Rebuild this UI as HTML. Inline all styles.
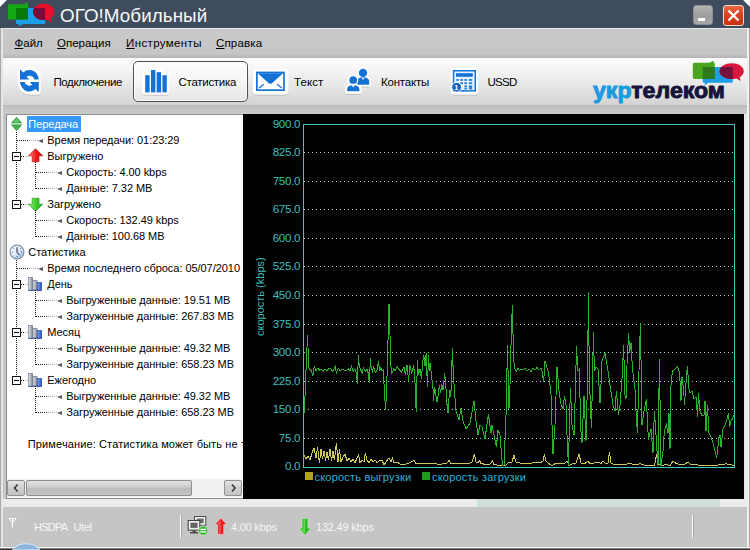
<!DOCTYPE html>
<html lang="ru"><head><meta charset="utf-8"><title>ОГО!Мобильный</title>
<style>
html,body{margin:0;padding:0;width:750px;height:550px;overflow:hidden;background:#fff;}
body{font-family:"Liberation Sans","DejaVu Sans",sans-serif;font-size:11px;color:#000;position:relative;}
*{box-sizing:border-box;}
.abs{position:absolute;}
#win{position:absolute;left:0;top:0;width:750px;height:550px;background:#c6c6c6;overflow:hidden;clip-path:polygon(7px 0,743px 0,750px 7px,750px 550px,0 550px,0 7px);}
#title{position:absolute;left:0;top:0;width:750px;height:28px;background:#3e4c5e;}
#title .cap{position:absolute;left:60px;top:4px;font-size:18.8px;line-height:24px;letter-spacing:0.08px;color:#f8f8f8;white-space:nowrap;}
#menubar{position:absolute;left:0;top:28px;width:750px;height:30px;background:linear-gradient(#c9c9c9,#c6c6c6 85%,#b4b4b4);border-top:1px solid #e6e8ea;}
#menubar span{position:absolute;top:7px;font-size:11.5px;line-height:15px;color:#000;white-space:nowrap;}
#menubar u{text-decoration:underline;text-underline-offset:1px;}
#toolbar{position:absolute;left:3px;top:58px;width:744px;height:47px;background:linear-gradient(#fcfcfc 0%,#f3f3f3 30%,#e4e4e4 65%,#d3d3d3 100%);}
.lbl{position:absolute;top:75px;font-size:11.5px;line-height:14px;color:#000;white-space:nowrap;}
#band{position:absolute;left:3px;top:105px;width:745px;height:9px;background:linear-gradient(#bababa,#c4c4c4 40%,#cacaca);}
#selbtn{position:absolute;left:133px;top:61px;width:115px;height:41px;border:1.5px solid #505050;border-radius:5px;background:linear-gradient(#fefefe,#f4f4f4 55%,#e6e6e6);box-shadow:inset 0 0 0 1px rgba(255,255,255,.9);}
#tree{position:absolute;left:6px;top:114px;width:238px;height:385px;background:#fff;border:1px solid #8c8c8c;overflow:hidden;}
#treein{position:absolute;left:0;top:0;width:236px;height:364px;overflow:hidden;}
.t{position:absolute;height:16px;line-height:17px;padding:0 3px 0 2px;margin-left:-2px;text-indent:-0.7px;white-space:nowrap;font-size:11px;letter-spacing:-0.05px;color:#000;}
.t.sel{background:#3399ff;color:#fff;}
.row{position:absolute;left:0;width:60px;height:16px;}
.ti{position:absolute;}
.dv{position:absolute;width:1px;background:repeating-linear-gradient(to bottom,#1a1a1a 0 1px,transparent 1px 2px);}
.dh{position:absolute;height:1px;background:repeating-linear-gradient(to right,#1a1a1a 0 1px,transparent 1px 2px);-webkit-mask-image:linear-gradient(to right,#000 0 50%,rgba(0,0,0,.35) 62% 100%);mask-image:linear-gradient(to right,#000 0 50%,rgba(0,0,0,.35) 62% 100%);}
.dh.s{-webkit-mask-image:none;mask-image:none;}
.tr{position:absolute;width:0;height:0;border-top:2.5px solid transparent;border-bottom:2.5px solid transparent;border-right:5px solid #585858;margin-top:0.5px;}
.bx{position:absolute;width:9px;height:9px;border:1px solid #111;background:#fff;}
.bx:after{content:"";position:absolute;left:1px;top:3px;width:5px;height:1px;background:#000;}
#hs{position:absolute;left:0px;top:364px;width:235px;height:18px;background:#f0f0f0;border:1px solid #f0f0f0;}
#hs .b{position:absolute;top:0;width:18px;height:16px;border:1px solid #909090;border-radius:2px;background:linear-gradient(#e4e4e4,#cfcfcf 50%,#c4c4c4);}
#hs .th{position:absolute;left:18px;top:0;width:166px;height:16px;border:1px solid #8f8f8f;border-radius:2px;background:linear-gradient(#e2e2e2,#cdcdcd 45%,#bbbbbb 55%,#c4c4c4);}
#chart{position:absolute;left:243px;top:114px;width:501px;height:385px;background:#000;}
#chart text{font-family:"Liberation Sans","DejaVu Sans",sans-serif;font-size:11px;}
#chart .ax{fill:#3cbfbd;font-size:11.6px;letter-spacing:-0.28px;}
#chart .lg{fill:#30b2d8;font-size:11px;letter-spacing:0.2px;}
#strip{position:absolute;left:3px;top:499px;width:745px;height:8px;background:#ececec;}
#strip i{position:absolute;left:474px;top:0;width:243px;height:8px;background:#cfe0da;}
#status{position:absolute;left:3px;top:507px;width:745px;height:41px;background:#c5c5c5;}
.st{position:absolute;top:520px;line-height:14px;font-size:11px;letter-spacing:-0.2px;color:#f6f6f6;white-space:pre;}
.sep{position:absolute;top:515px;width:1px;height:23px;background:#fff;box-shadow:1px 0 0 #a4a4b4;}
.edgeL{position:absolute;left:0;top:28px;width:3px;height:522px;background:linear-gradient(to right,#a8a8a8 0 1px,#e6e6e6 1px 3px);}
.edgeR{position:absolute;left:747px;top:28px;width:3px;height:522px;background:linear-gradient(to right,#f0f0f0 0 2px,#a4a4a4 2px 3px);}
.edgeB{position:absolute;left:0;top:547px;width:750px;height:3px;background:linear-gradient(#f2f2f2 0 1px,#8a8a8a 1px 2px,#2a2a2a 2px 3px);}
</style></head>
<body>
<div id="win">
 <div id="title">
  <svg class="abs" style="left:0;top:0" width="60" height="28" viewBox="0 0 60 28">
   <defs><clipPath id="cb"><rect x="16" y="8" width="29" height="16"/></clipPath></defs>
   <path d="M16 8 H45 V24 H23.5 L18.6 26.3 L19 24 H16 Z" fill="#1a9fe8"/>
   <path d="M8 4.2 H24 L27.4 1.8 L28 4.2 V19.5 H8 Z" fill="#14a714"/>
   <path d="M43.600 3.500 C49.500 3.500 54.300 7.200 54.300 11.800 C54.300 14.300 52.900 16.500 50.700 18 L51.600 23 L47.200 19.600 C46 19.900 44.800 20.100 43.600 20.100 C37.700 20.100 33 16.400 33 11.800 C33 7.200 37.700 3.500 43.600 3.500 Z" fill="#e60f2d"/>
   <rect x="16" y="8" width="12" height="11.500" fill="#077907"/>
   <ellipse cx="43.600" cy="11.800" rx="10.600" ry="8.300" fill="#7a0a3a" clip-path="url(#cb)"/>
  </svg>
  <div class="cap">ОГО!Мобильный</div>
  <div class="abs" style="left:693px;top:5px;width:20px;height:20px;border-radius:3px;background:linear-gradient(#b5b5b5,#9d9d9d 55%,#a8a8a8);border:1px solid #8a8f96;"><i class="abs" style="left:4px;top:12px;width:7px;height:3px;background:#fff;"></i></div>
  <div class="abs" style="left:723px;top:5px;width:21px;height:21px;border-radius:3px;background:linear-gradient(#e96a45,#d8401c 50%,#c93010);border:1px solid #f6d8cc;">
   <svg width="19" height="19" viewBox="0 0 19 19" style="position:absolute;left:0;top:0"><path d="M4.500 4.500 L14.500 14.500 M14.500 4.500 L4.500 14.500" stroke="#fff" stroke-width="2.300"/></svg>
  </div>
 </div>
 <div id="menubar">
  <span style="left:14.5px"><u>Ф</u>айл</span>
  <span style="left:57px"><u>О</u>перация</span>
  <span style="left:126px;letter-spacing:0.38px"><u>И</u>нструменты</span>
  <span style="left:216px;letter-spacing:0.15px"><u>С</u>правка</span>
 </div>
 <div id="toolbar"></div>
 <div id="selbtn"></div>
 <svg class="abs" style="left:0;top:58px" width="750" height="47" viewBox="0 58 750 47">
  <defs><clipPath id="cb2"><rect x="702.700" y="67" width="30.100" height="15.800"/></clipPath>
  <filter id="sh" x="-20%" y="-20%" width="140%" height="140%"><feDropShadow dx="0" dy="0.600" stdDeviation="0.700" flood-color="#000" flood-opacity=".28"/></filter></defs>
  <!-- refresh -->
  <g filter="url(#sh)"><path d="M21.500 66.800 H30 C36 66.800 40.800 71.500 40.800 77 V91 Q40.800 94.400 37.500 94.400 H29 C23 94.400 18 89.700 18 84 V70 Q18 66.800 21.500 66.800 Z" fill="#fff"/></g>
  <g fill="#1472d6"><path id="ra" d="M20 69.300 L20 79.400 L29.200 79.400 L26.500 76.700 C28.300 75.300 31 75.400 32.600 76.800 C33.400 77.500 34 78.400 34.200 79.400 L38.800 79.400 C38.600 76.400 37 73.400 34.400 71.500 C31 69.100 26.300 69.500 23.300 72.400 Z"/><use href="#ra" transform="rotate(180 29.400 80.700)"/></g>
  <!-- bars -->
  <g filter="url(#sh)"><path d="M141.800 91 V76 Q141.800 72.600 145 72.600 H148.400 Q148.600 67.600 153 67.600 H159.600 Q163.600 67.800 163.800 72.600 H166.400 Q169.600 72.600 169.600 76 V91 Q169.600 94.800 166 94.800 H145.500 Q141.800 94.800 141.800 91 Z" fill="#fff"/></g>
  <g fill="#1472d6"><rect x="145.200" y="75.200" width="4.400" height="17.200"/><rect x="151" y="70" width="4.400" height="22.400"/><rect x="156.700" y="72.200" width="4.400" height="20.200"/><rect x="162.400" y="75.200" width="4.400" height="17.200"/></g>
  <!-- envelope -->
  <g filter="url(#sh)"><rect x="252.600" y="68.800" width="36" height="25.600" rx="4" fill="#fff"/></g>
  <rect x="256" y="71.600" width="28.800" height="19.400" fill="#1472d6"/>
  <rect x="257.700" y="73.300" width="25.400" height="16" fill="#fff"/>
  <path d="M257.700 73.300 H283.100 L272 83.200 Q270.400 84.500 268.800 83.200 Z" fill="#1472d6"/>
  <path d="M259 88 L263.800 84.300 M277 84.300 L281.800 88" stroke="#1472d6" stroke-width="1.300" fill="none"/>
  <!-- contacts -->
  <g filter="url(#sh)" fill="#fff" stroke="#fff" stroke-width="4.400" stroke-linejoin="round">
   <circle cx="363" cy="72.900" r="4"/><path d="M357.600 84.400 V81.500 C357.600 78.600 360 77.400 363 77.400 C366.200 77.400 368.800 78.600 368.800 81.500 V84.400 Z"/>
   <circle cx="353.200" cy="80.200" r="4"/><path d="M347 91.500 V89 C347 86 349.600 84.900 353.200 84.900 C357 84.900 359.500 86 359.500 89 V91.500 Z"/>
  </g>
  <g fill="#1472d6">
   <circle cx="363" cy="72.900" r="4.200"/><path d="M357.200 84.800 V81.500 C357.200 78.400 360 77.200 363 77.200 C366.200 77.200 369.200 78.400 369.200 81.500 V84.800 Z"/>
  </g>
  <g fill="#1472d6" stroke="#fff" stroke-width="1.300">
   <circle cx="353.200" cy="80.200" r="4.500"/><path d="M346.500 92 V89 C346.500 85.800 349.600 84.500 353.200 84.500 C357 84.500 360 85.800 360 89 V92 Z"/>
  </g>
  <path d="M361.500 77.700 L363 80 L364.500 77.700 Z M351.700 85.300 L353.200 87.600 L354.700 85.300 Z" fill="#fff"/>
  <!-- ussd -->
  <g filter="url(#sh)"><rect x="450.800" y="67.400" width="27.200" height="27" rx="2.500" fill="#fff"/></g>
  <rect x="452.800" y="70" width="23.200" height="21.600" fill="#1472d6"/>
  <rect x="454.300" y="71.500" width="20.200" height="18.600" fill="#eaf3fd"/>
  <rect x="456" y="73.200" width="16.800" height="3.600" fill="#1472d6"/>
  <g fill="#2a7fdc"><rect x="456.200" y="79" width="2.600" height="1.900"/><rect x="460.300" y="79" width="2.600" height="1.900"/><rect x="464.400" y="79" width="2.600" height="1.900"/><rect x="468.800" y="79" width="3.400" height="1.900"/>
  <rect x="460.300" y="82.200" width="2.600" height="1.900"/><rect x="464.400" y="82.200" width="2.600" height="1.900"/><rect x="468.800" y="82.200" width="3.400" height="1.900"/>
  <rect x="464.400" y="85.400" width="2.600" height="1.900"/><rect x="468.800" y="85.400" width="3.400" height="4"/><rect x="464.400" y="87.800" width="2.600" height="1.700"/></g>
  <circle cx="456.600" cy="87.200" r="4.900" fill="#0f62c8" stroke="#fff" stroke-width="1"/>
  <text x="456.400" y="90" font-size="7.500" font-weight="bold" fill="#fff" text-anchor="middle" font-family="Liberation Sans, sans-serif">1</text>
  <!-- logo -->
  <path d="M703.700 67 H731.800 Q732.800 67 732.800 68 V81.800 Q732.800 82.800 731.800 82.800 H708.500 L704.500 85.600 L705 82.800 H703.700 Q702.700 82.800 702.700 81.800 V68 Q702.700 67 703.700 67 Z" fill="#1a9fe8"/>
  <path d="M694.300 62.700 H709.500 L713.300 60.700 L713.800 62.700 Q714.800 62.800 714.800 64 V77.500 Q714.800 79 713.300 79 H694.300 Q692.800 79 692.800 77.500 V64.200 Q692.800 62.700 694.300 62.700 Z" fill="#4aa61e"/>
  <path d="M731.700 63.300 C738.400 63.300 743.800 66.800 743.800 71.200 C743.800 73.600 742.300 75.700 739.800 77.200 L740.600 81 L736.400 78.500 C735 78.900 733.400 79.100 731.700 79.100 C725 79.100 719.600 75.600 719.600 71.200 C719.600 66.800 725 63.300 731.700 63.300 Z" fill="#d8183a"/>
  <rect x="702.700" y="67" width="12.100" height="12" fill="#2c7a1c"/>
  <ellipse cx="731.700" cy="71.200" rx="12.100" ry="7.900" fill="#74123f" clip-path="url(#cb2)"/>
  <text x="593" y="97.800" font-family="Liberation Sans, DejaVu Sans, sans-serif" font-weight="bold" font-size="21.500" textLength="132" lengthAdjust="spacingAndGlyphs" fill="#1a9ae0" stroke="#1a9ae0" stroke-width="0.9" stroke-linejoin="round">укр<tspan fill="#17143a" stroke="#17143a">телеком</tspan></text>
 </svg>
 <span class="lbl" style="left:53.5px;letter-spacing:-0.4px">Подключение</span>
 <span class="lbl" style="left:178.5px;letter-spacing:-0.28px">Статистика</span>
 <span class="lbl" style="left:294px;letter-spacing:0.1px">Текст</span>
 <span class="lbl" style="left:381px;letter-spacing:-0.2px">Контакты</span>
 <span class="lbl" style="left:487.5px;letter-spacing:-0.7px">USSD</span>
 <div id="band"></div>
 <div id="tree">
  <div id="treein">
<i class="dv" style="left:9px;top:17px;height:68px"></i>
<i class="dv" style="left:9px;top:145px;height:116px"></i>
<div class="row" style="top:1px"><svg class="ti" style="left:4px;top:1px" width="11.2" height="14" viewBox="0 0 12 15"><path d="M6 0.3 L11.5 6.4 H0.5 Z" fill="#3fb54a" stroke="#1e8a2a" stroke-width=".6"/><path d="M6 14.7 L11.5 8.4 H0.5 Z" fill="#3fb54a" stroke="#1e8a2a" stroke-width=".6"/><path d="M6 1.6 L9.6 5.6 H2.4 Z" fill="#7fdc84" opacity=".6"/></svg></div>
<span class="t sel" style="left:22px;top:1px">Передача</span>
<i class="dh" style="left:10px;top:25px;width:21px"></i>
<i class="tr" style="left:31px;top:23px"></i>
<span class="t" style="left:41px;top:17px">Время передачи: 01:23:29</span>
<i class="dh" style="left:14px;top:41px;width:7px"></i>
<i class="bx" style="left:5px;top:37px"></i>
<div class="row" style="top:33px"><svg class="ti" style="left:21px;top:0" width="16" height="15" viewBox="0 0 16 15"><defs><linearGradient id="gr" x1="0" y1="0" x2="1" y2="0"><stop offset="0" stop-color="#ff8a8a"/><stop offset=".5" stop-color="#f02020"/><stop offset="1" stop-color="#d80000"/></linearGradient></defs><path d="M7.6 0.8 L14.8 7.8 H11 V13.8 H4.2 V7.8 H0.4 Z" fill="url(#gr)" stroke="#c01818" stroke-width=".7"/></svg></div>
<i class="dv" style="left:28px;top:47px;height:27px"></i>
<span class="t" style="left:41px;top:33px">Выгружено</span>
<i class="dh" style="left:29px;top:57px;width:21px"></i>
<i class="tr" style="left:50px;top:55px"></i>
<span class="t" style="left:60px;top:49px">Скорость: 4.00 kbps</span>
<i class="dh" style="left:29px;top:73px;width:21px"></i>
<i class="tr" style="left:50px;top:71px"></i>
<span class="t" style="left:60px;top:65px">Данные: 7.32 MB</span>
<i class="dh" style="left:14px;top:89px;width:7px"></i>
<i class="bx" style="left:5px;top:85px"></i>
<div class="row" style="top:81px"><svg class="ti" style="left:21px;top:1px" width="16" height="15" viewBox="0 0 16 15"><defs><linearGradient id="gg" x1="0" y1="0" x2="1" y2="0"><stop offset="0" stop-color="#9df08a"/><stop offset=".5" stop-color="#3fd030"/><stop offset="1" stop-color="#22a818"/></linearGradient></defs><path d="M7.6 14.3 L14.8 7.2 H11 V1.3 H4.2 V7.2 H0.4 Z" fill="url(#gg)" stroke="#2a9a22" stroke-width=".7"/></svg></div>
<i class="dv" style="left:28px;top:95px;height:27px"></i>
<span class="t" style="left:41px;top:81px">Загружено</span>
<i class="dh" style="left:29px;top:105px;width:21px"></i>
<i class="tr" style="left:50px;top:103px"></i>
<span class="t" style="left:60px;top:97px">Скорость: 132.49 kbps</span>
<i class="dh" style="left:29px;top:121px;width:21px"></i>
<i class="tr" style="left:50px;top:119px"></i>
<span class="t" style="left:60px;top:113px">Данные: 100.68 MB</span>
<div class="row" style="top:129px"><svg class="ti" style="left:2px;top:0" width="16" height="16" viewBox="0 0 16 16"><defs><linearGradient id="gc" x1="0" y1="0" x2="1" y2="1"><stop offset="0" stop-color="#ffffff"/><stop offset=".45" stop-color="#e6eefa"/><stop offset="1" stop-color="#8fb4ea"/></linearGradient></defs><circle cx="8" cy="8" r="6.9" fill="url(#gc)" stroke="#8391a8" stroke-width="1.3"/><path d="M8 3.2 V8.2 L10.6 11.2" fill="none" stroke="#20242c" stroke-width="1"/><g fill="#4a5a78"><rect x="3" y="7.6" width="1" height="1"/><rect x="12" y="7.6" width="1" height="1"/><rect x="7.500" y="12" width="1" height="1"/><rect x="4.300" y="4.300" width=".8" height=".8"/><rect x="11" y="4.300" width=".8" height=".8"/></g></svg></div>
<span class="t" style="left:22px;top:129px">Статистика</span>
<i class="dh" style="left:10px;top:153px;width:21px"></i>
<i class="tr" style="left:31px;top:151px"></i>
<span class="t" style="left:41px;top:145px">Время последнего сброса: 05/07/2010</span>
<i class="dh" style="left:14px;top:169px;width:7px"></i>
<i class="bx" style="left:5px;top:165px"></i>
<div class="row" style="top:161px"><svg class="ti" style="left:21px;top:0" width="16" height="16" viewBox="0 0 16 16"><defs><linearGradient id="gb" x1="0" y1="0" x2="1" y2="0"><stop offset="0" stop-color="#f2f2f2"/><stop offset=".5" stop-color="#b4b8c0"/><stop offset="1" stop-color="#80848c"/></linearGradient><linearGradient id="gb2" x1="0" y1="0" x2="1" y2="0"><stop offset="0" stop-color="#7aa0f0"/><stop offset="1" stop-color="#2050c8"/></linearGradient></defs><rect x="0.700" y="1.600" width="3.800" height="12.600" fill="url(#gb)" stroke="#6a7890" stroke-width=".7"/><rect x="5" y="4.600" width="4" height="9.600" fill="url(#gb)" stroke="#6a7890" stroke-width=".7"/><rect x="9.600" y="6.600" width="4" height="7.600" fill="url(#gb2)" stroke="#2a48a0" stroke-width=".7"/><rect x="0.300" y="13.800" width="13.700" height="1" fill="#3a58a8"/></svg></div>
<i class="dv" style="left:28px;top:175px;height:27px"></i>
<span class="t" style="left:41px;top:161px">День</span>
<i class="dh" style="left:29px;top:185px;width:21px"></i>
<i class="tr" style="left:50px;top:183px"></i>
<span class="t" style="left:60px;top:177px">Выгруженные данные: 19.51 MB</span>
<i class="dh" style="left:29px;top:201px;width:21px"></i>
<i class="tr" style="left:50px;top:199px"></i>
<span class="t" style="left:60px;top:193px">Загруженные данные: 267.83 MB</span>
<i class="dh" style="left:14px;top:217px;width:7px"></i>
<i class="bx" style="left:5px;top:213px"></i>
<div class="row" style="top:209px"><svg class="ti" style="left:21px;top:0" width="16" height="16" viewBox="0 0 16 16"><defs><linearGradient id="gb" x1="0" y1="0" x2="1" y2="0"><stop offset="0" stop-color="#f2f2f2"/><stop offset=".5" stop-color="#b4b8c0"/><stop offset="1" stop-color="#80848c"/></linearGradient><linearGradient id="gb2" x1="0" y1="0" x2="1" y2="0"><stop offset="0" stop-color="#7aa0f0"/><stop offset="1" stop-color="#2050c8"/></linearGradient></defs><rect x="0.700" y="1.600" width="3.800" height="12.600" fill="url(#gb)" stroke="#6a7890" stroke-width=".7"/><rect x="5" y="4.600" width="4" height="9.600" fill="url(#gb)" stroke="#6a7890" stroke-width=".7"/><rect x="9.600" y="6.600" width="4" height="7.600" fill="url(#gb2)" stroke="#2a48a0" stroke-width=".7"/><rect x="0.300" y="13.800" width="13.700" height="1" fill="#3a58a8"/></svg></div>
<i class="dv" style="left:28px;top:223px;height:27px"></i>
<span class="t" style="left:41px;top:209px">Месяц</span>
<i class="dh" style="left:29px;top:233px;width:21px"></i>
<i class="tr" style="left:50px;top:231px"></i>
<span class="t" style="left:60px;top:225px">Выгруженные данные: 49.32 MB</span>
<i class="dh" style="left:29px;top:249px;width:21px"></i>
<i class="tr" style="left:50px;top:247px"></i>
<span class="t" style="left:60px;top:241px">Загруженные данные: 658.23 MB</span>
<i class="dh" style="left:14px;top:265px;width:7px"></i>
<i class="bx" style="left:5px;top:261px"></i>
<div class="row" style="top:257px"><svg class="ti" style="left:21px;top:0" width="16" height="16" viewBox="0 0 16 16"><defs><linearGradient id="gb" x1="0" y1="0" x2="1" y2="0"><stop offset="0" stop-color="#f2f2f2"/><stop offset=".5" stop-color="#b4b8c0"/><stop offset="1" stop-color="#80848c"/></linearGradient><linearGradient id="gb2" x1="0" y1="0" x2="1" y2="0"><stop offset="0" stop-color="#7aa0f0"/><stop offset="1" stop-color="#2050c8"/></linearGradient></defs><rect x="0.700" y="1.600" width="3.800" height="12.600" fill="url(#gb)" stroke="#6a7890" stroke-width=".7"/><rect x="5" y="4.600" width="4" height="9.600" fill="url(#gb)" stroke="#6a7890" stroke-width=".7"/><rect x="9.600" y="6.600" width="4" height="7.600" fill="url(#gb2)" stroke="#2a48a0" stroke-width=".7"/><rect x="0.300" y="13.800" width="13.700" height="1" fill="#3a58a8"/></svg></div>
<i class="dv" style="left:28px;top:271px;height:27px"></i>
<span class="t" style="left:41px;top:257px">Ежегодно</span>
<i class="dh" style="left:29px;top:281px;width:21px"></i>
<i class="tr" style="left:50px;top:279px"></i>
<span class="t" style="left:60px;top:273px">Выгруженные данные: 49.32 MB</span>
<i class="dh" style="left:29px;top:297px;width:21px"></i>
<i class="tr" style="left:50px;top:295px"></i>
<span class="t" style="left:60px;top:289px">Загруженные данные: 658.23 MB</span>
<span class="t" style="left:21.5px;top:321px;letter-spacing:0.12px">Примечание: Статистика может быть не точной</span>
  </div>
  <div id="hs"><div class="b" style="left:-1px"><svg width="15" height="14" viewBox="-1 0 15 14" style="display:block"><path d="M8.600 3.600 L5.400 7 L8.600 10.400" fill="none" stroke="#333" stroke-width="1.500"/></svg></div><div class="th"></div><div class="b" style="left:216px"><svg width="15" height="14" viewBox="-0.5 0 15 14" style="display:block"><path d="M6.400 3.600 L9.600 7 L6.400 10.400" fill="none" stroke="#333" stroke-width="1.500"/></svg></div></div>
 </div>
 <div id="chart">
  <svg width="501" height="385" viewBox="0 0 501 385" style="position:absolute;left:0;top:0">
<line x1="61" y1="324.5" x2="491" y2="324.5" stroke="#a2cfcf" stroke-width="1" stroke-dasharray="1 3"/>
<line x1="61" y1="295.5" x2="491" y2="295.5" stroke="#a2cfcf" stroke-width="1" stroke-dasharray="1 3"/>
<line x1="61" y1="267.5" x2="491" y2="267.5" stroke="#a2cfcf" stroke-width="1" stroke-dasharray="1 3"/>
<line x1="61" y1="238.5" x2="491" y2="238.5" stroke="#a2cfcf" stroke-width="1" stroke-dasharray="1 3"/>
<line x1="61" y1="210.5" x2="491" y2="210.5" stroke="#a2cfcf" stroke-width="1" stroke-dasharray="1 3"/>
<line x1="61" y1="181.5" x2="491" y2="181.5" stroke="#a2cfcf" stroke-width="1" stroke-dasharray="1 3"/>
<line x1="61" y1="152.5" x2="491" y2="152.5" stroke="#a2cfcf" stroke-width="1" stroke-dasharray="1 3"/>
<line x1="61" y1="124.5" x2="491" y2="124.5" stroke="#a2cfcf" stroke-width="1" stroke-dasharray="1 3"/>
<line x1="61" y1="95.5" x2="491" y2="95.5" stroke="#a2cfcf" stroke-width="1" stroke-dasharray="1 3"/>
<line x1="61" y1="67.5" x2="491" y2="67.5" stroke="#a2cfcf" stroke-width="1" stroke-dasharray="1 3"/>
<line x1="61" y1="38.5" x2="491" y2="38.5" stroke="#a2cfcf" stroke-width="1" stroke-dasharray="1 3"/>
<rect x="60.5" y="10.5" width="431" height="343" fill="none" stroke="#45c3c6" stroke-width="1"/>
<polyline points="61.0,341.0 63.0,345.0 65.0,342.0 67.0,346.0 69.0,339.0 71.0,334.0 73.0,344.0 74.6,333.0 76.4,349.0 78.0,335.0 79.4,345.0 81.0,337.0 82.6,347.0 84.0,338.0 85.4,346.0 87.0,335.0 88.6,347.0 90.0,337.0 91.4,346.0 93.4,329.0 95.0,348.0 96.4,335.0 98.0,348.0 100.0,343.0 102.0,340.0 104.0,347.0 106.0,344.0 108.0,348.0 110.0,345.0 112.0,349.0 114.0,344.0 115.6,341.0 117.0,349.0 119.0,346.0 121.0,348.0 122.4,339.0 124.0,346.0 126.0,349.0 128.0,345.0 130.0,348.0 132.0,346.0 134.0,348.6 136.0,347.0 139.0,346.0 141.0,351.0 143.0,348.0 146.0,344.0 148.0,348.0 149.4,344.6 151.0,349.0 154.0,348.0 157.0,350.0 161.0,350.6 165.0,349.4 171.0,346.6 173.0,349.4 177.0,350.0 187.0,349.6 197.0,350.2 204.0,349.4 206.0,346.0 208.0,349.5 213.0,350.0 219.0,349.5 225.0,350.0 229.0,348.0 231.4,340.0 233.0,348.0 235.0,349.0 236.6,346.6 238.0,349.5 243.0,350.5 247.0,350.0 249.4,347.0 251.0,350.5 257.0,351.5 262.0,352.0 265.0,349.0 269.0,348.0 271.0,341.0 273.0,348.0 277.0,349.0 283.0,349.5 289.0,349.0 293.0,348.0 297.0,349.0 300.0,347.0 301.4,340.0 303.0,347.0 305.0,349.0 309.0,351.5 313.0,349.0 317.0,350.0 322.0,349.0 324.0,347.0 326.0,351.5 329.0,350.0 333.0,349.0 336.0,340.0 338.0,349.0 342.0,349.5 345.0,347.0 347.0,350.0 351.0,349.0 355.0,348.0 358.0,349.5 360.0,347.0 362.0,349.0 365.0,349.0 366.4,338.0 368.0,349.0 371.0,350.5 377.0,350.5 381.0,351.0 385.0,349.5 389.0,350.0 393.0,351.0 397.0,349.5 401.0,351.0 407.0,351.0 411.0,352.0 412.4,348.0 413.4,340.0 415.0,350.0 419.0,352.0 423.0,350.0 427.0,352.0 430.0,347.0 433.0,349.5 437.0,350.5 441.0,351.0 445.0,348.0 447.0,350.0 451.0,350.5 455.0,351.0 461.0,351.0 467.0,351.5 473.0,351.5 477.0,350.5 481.0,351.0 483.0,349.0 485.0,350.5 489.0,351.0 491.0,351.0" fill="none" stroke="#cfc75a" stroke-width="1" shape-rendering="crispEdges"/>
<polyline points="61.5,299.0 62.5,266.0 63.2,253.0 64.5,221.0 65.2,238.0 65.8,254.0 67.0,255.4 68.2,256.6 70.0,261.4 71.2,252.4 73.0,256.6 74.8,254.2 76.6,256.0 78.4,255.4 80.2,257.2 82.0,254.8 83.8,256.6 85.6,254.8 87.4,254.2 89.2,257.2 91.0,255.4 92.2,252.4 93.4,259.0 95.2,254.2 97.0,256.6 98.8,255.4 100.6,256.0 103.0,256.6 105.4,254.8 107.2,256.6 108.4,252.4 110.2,257.2 112.0,254.8 113.2,259.0 114.4,269.8 115.4,241.0 116.2,251.8 117.4,255.4 119.2,259.0 120.4,253.6 122.2,257.2 124.0,255.4 125.2,259.0 126.4,268.6 127.4,244.0 128.2,254.2 129.4,257.2 130.6,253.0 132.4,258.4 134.2,255.4 135.4,247.0 136.6,256.6 137.8,253.6 139.0,257.2 140.2,256.0 141.4,276.0 142.5,296.0 143.5,281.0 144.8,233.0 146.0,190.0 147.0,221.0 147.8,252.0 149.0,259.4 150.8,254.6 152.0,257.0 154.4,252.8 156.2,255.8 158.6,258.0 161.0,253.4 162.4,260.6 164.0,251.0 165.6,267.0 166.8,251.0 168.8,259.4 170.6,251.0 171.8,264.0 173.2,298.0 174.4,245.6 175.4,260.6 177.2,254.6 178.4,265.4 179.6,248.6 180.8,241.4 182.0,252.0 183.2,239.0 184.4,272.6 185.6,241.4 186.4,257.0 187.4,248.6 188.6,264.0 189.8,269.0 190.4,287.0 191.6,272.6 192.8,281.0 194.0,288.0 195.2,281.0 196.4,271.4 197.6,278.6 198.8,270.2 200.0,276.0 201.6,259.4 202.8,271.4 203.6,287.0 205.0,299.0 206.6,276.0 207.8,283.4 208.6,258.0 209.4,233.6 210.2,257.0 211.4,276.0 213.0,297.0 216.0,306.0 218.0,294.0 220.0,307.0 223.0,315.0 227.0,309.0 231.0,287.0 233.0,307.0 235.0,321.0 237.0,311.0 239.0,313.0 242.0,325.0 245.4,300.0 248.0,319.0 249.0,311.0 251.4,323.0 253.4,333.0 255.0,316.0 257.0,321.0 259.4,351.0 261.0,352.0 263.4,291.0 264.4,231.0 266.0,295.0 267.0,271.0 268.4,216.0 269.4,191.0 270.6,247.0 272.0,255.0 273.5,257.0 275.0,254.5 276.5,256.5 278.0,255.0 280.0,256.0 282.0,254.5 284.0,257.0 286.0,255.0 288.0,257.5 290.0,254.0 292.0,256.0 294.0,253.5 296.0,256.0 298.0,254.0 299.0,257.0 300.6,268.0 302.0,246.6 303.5,252.0 305.0,257.0 306.5,266.0 308.0,281.0 310.0,340.0 312.0,311.0 314.0,253.0 316.0,277.0 318.0,290.0 320.0,295.0 321.4,282.0 323.0,291.0 324.0,321.0 325.4,352.0 327.4,274.0 329.0,311.0 331.0,321.0 332.6,271.0 333.4,232.0 335.0,257.0 336.6,255.0 337.4,311.0 339.0,329.0 341.0,282.0 343.0,327.0 344.5,266.0 345.4,178.0 346.4,266.0 348.4,314.0 349.5,266.0 350.4,218.0 351.4,257.0 353.0,253.0 355.0,255.0 357.0,289.0 358.5,261.0 359.0,247.0 362.0,239.0 365.0,257.0 367.0,271.0 370.0,291.0 372.0,297.0 373.4,277.0 375.4,301.0 377.0,291.0 379.0,265.0 380.6,231.0 382.0,281.0 383.0,285.0 384.0,251.0 385.6,219.4 386.6,239.0 388.0,229.0 389.0,247.0 390.0,259.0 392.0,275.0 393.0,297.0 394.4,319.0 396.0,257.0 397.4,209.0 398.6,281.0 399.0,311.0 401.0,297.0 403.4,285.0 405.4,326.0 408.0,315.0 410.0,339.0 411.4,297.0 413.0,321.0 415.0,352.0 416.4,245.0 418.0,352.0 420.0,337.0 421.4,317.0 423.4,311.0 425.0,319.0 426.0,299.0 427.0,335.0 428.0,271.0 429.4,257.0 432.0,255.0 434.6,252.6 436.6,259.0 438.0,287.0 439.0,263.0 440.6,275.0 441.5,291.0 443.0,269.0 444.4,251.6 446.0,275.0 447.0,279.0 449.0,277.0 451.0,285.0 453.0,283.0 454.6,303.0 455.4,279.0 457.0,297.0 459.0,302.0 461.0,301.0 462.0,287.0 463.0,317.0 464.4,291.0 466.0,319.0 468.0,323.0 470.0,329.0 472.0,337.0 473.4,343.0 474.6,339.0 475.4,325.0 477.0,321.0 478.0,333.0 480.0,315.0 482.0,311.0 484.0,305.0 485.4,299.0 486.6,313.0 488.0,307.0 489.4,305.0 490.6,301.0" fill="none" stroke="#2db02d" stroke-width="1" shape-rendering="crispEdges"/>
<text x="57.3" y="356.3" text-anchor="end" class="ax">0.0</text>
<text x="57.3" y="327.9" text-anchor="end" class="ax">75.0</text>
<text x="57.3" y="298.9" text-anchor="end" class="ax">150.0</text>
<text x="57.3" y="270.9" text-anchor="end" class="ax">225.0</text>
<text x="57.3" y="241.9" text-anchor="end" class="ax">300.0</text>
<text x="57.3" y="213.9" text-anchor="end" class="ax">375.0</text>
<text x="57.3" y="184.9" text-anchor="end" class="ax">450.0</text>
<text x="57.3" y="155.9" text-anchor="end" class="ax">525.0</text>
<text x="57.3" y="127.9" text-anchor="end" class="ax">600.0</text>
<text x="57.3" y="98.9" text-anchor="end" class="ax">675.0</text>
<text x="57.3" y="70.9" text-anchor="end" class="ax">750.0</text>
<text x="57.3" y="41.9" text-anchor="end" class="ax">825.0</text>
<text x="57.3" y="14.4" text-anchor="end" class="ax">900.0</text>
<text transform="translate(20.8 222) rotate(-90)" class="ax" style="font-size:11px;letter-spacing:0">скорость (kbps)</text>
<rect x="62" y="358" width="8" height="8" fill="#b3a21e"/>
<text x="71.5" y="366.5" class="lg">скорость выгрузки</text>
<rect x="179" y="358" width="8" height="8" fill="#1d9d1d"/>
<text x="189" y="366.5" class="lg">скорость загрузки</text>
  </svg>
 </div>
 <div class="abs" style="left:744px;top:114px;width:3px;height:385px;background:#e8e8e8"></div>
 <div id="strip"><i></i></div>
 <div id="status"></div>
 <svg class="abs" style="left:8px;top:518px" width="9" height="10" viewBox="0 0 9 10"><path d="M0.500 0.500 H8.500 M4.500 0.500 V9.500 M1 1 L4.500 4.500 L8 1" fill="none" stroke="#fff" stroke-width="1"/></svg>
 <span class="st" style="left:34px;letter-spacing:-0.75px">HSDPA</span><span class="st" style="left:73.5px;letter-spacing:-0.35px">Utel</span>
 <i class="sep" style="left:180px"></i>
 <svg class="abs" style="left:185px;top:513px" width="45" height="26" viewBox="185 513 45 26">
   <rect x="194.500" y="516.500" width="11.300" height="8.800" fill="#f2f2f2" stroke="#4a4a4a"/><rect x="196.600" y="518.600" width="7.100" height="4.600" fill="#6a6a6a"/>
   <rect x="188.200" y="520.500" width="11.600" height="9.600" fill="#efefef" stroke="#3c3c3c"/><rect x="190.400" y="522.700" width="7.200" height="5.200" fill="#646464"/>
   <rect x="192.500" y="530.600" width="3.200" height="1.800" fill="#4a4a4a"/><rect x="190" y="532.200" width="8.200" height="1.300" fill="#3c3c3c"/>
   <circle cx="203.300" cy="530.600" r="4.700" fill="#35b535" stroke="#d8f4d8" stroke-width=".7"/><rect x="200.300" y="528.800" width="6" height="1.300" fill="#fff"/><rect x="200.300" y="531.200" width="6" height="1.300" fill="#fff"/>
   <path d="M220.900 518.200 L226.600 524.600 H223.600 V534.200 H217.800 V524.600 H215 Z" fill="#e81818" stroke="#f4d0d0" stroke-width=".5"/><path d="M220.600 520 L217.500 524 H219.300 V533.500 H220.800 Z" fill="#ff8a8a" opacity=".6"/>
 </svg>
 <span class="st" style="left:231px">4.00 kbps</span>
 <svg class="abs" style="left:296px;top:513px" width="20" height="26" viewBox="296 513 20 26">
   <path d="M305 535 L310.900 528.200 H307.900 V518.400 H302.100 V528.200 H299.100 Z" fill="#2bbd1e" stroke="#d0f0cc" stroke-width=".5"/><path d="M304.800 533.400 L301.600 529.200 H303.500 V519.200 H305 Z" fill="#a0f090" opacity=".6"/>
 </svg>
 <span class="st" style="left:316px">132.49 kbps</span>
 <i class="sep" style="left:692px"></i>
 <div class="edgeL"></div><div class="edgeR"></div><div class="edgeB"></div>
 <svg class="abs" style="left:12px;top:543px" width="30" height="7" viewBox="0 0 30 7"><path d="M0.500 7 C4 2 9 0.800 14 0.800 C19 0.800 24 2 28 7 Z" fill="#8fb4dc" stroke="#d8ecff" stroke-width="1"/></svg>
</div>
</body></html>
